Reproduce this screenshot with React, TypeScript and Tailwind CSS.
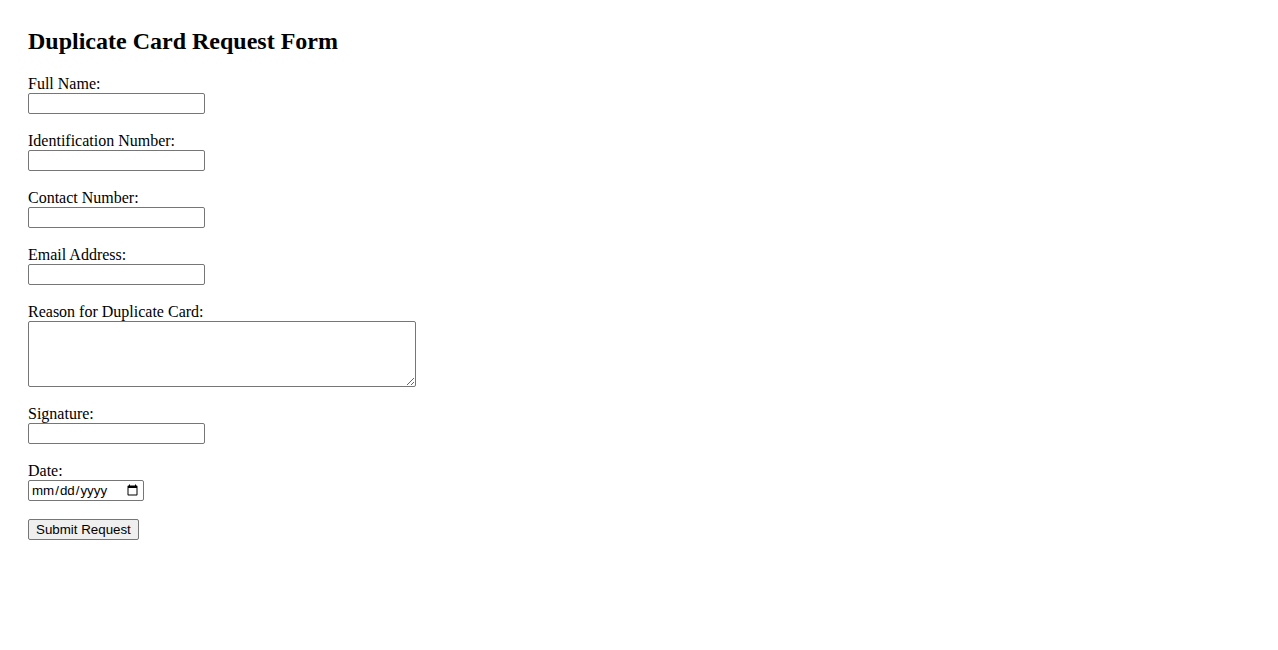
import React from 'react';

const FIELDS = [
  { label: 'Full Name:', type: 'text' },
  { label: 'Identification Number:', type: 'text' },
  { label: 'Contact Number:', type: 'tel' },
  { label: 'Email Address:', type: 'email' },
];

const labelCls = 'block pb-[2px] leading-[15px]';

const inputCls =
  "block h-[21px] w-[177px] rounded-[2px] border border-[#767676] bg-white px-[2px] py-[1px] text-[13.33px] font-['Liberation_Sans',Arial,sans-serif] text-black";

export default function App() {
  return (
    <div className="min-h-screen bg-white pl-[28px] pt-[27px] font-['Liberation_Serif','Times_New_Roman',serif] text-[16px] text-black">
      <h2 className="mb-[21px] text-[24px] font-bold leading-[28px]">Duplicate Card Request Form</h2>

      <form className="flex flex-col items-start" onSubmit={(e) => e.preventDefault()}>
        {FIELDS.map((f) => (
          <div key={f.label} className="mb-[19px]">
            <label className={labelCls}>{f.label}</label>
            <input type={f.type} className={inputCls} />
          </div>
        ))}

        <div className="mb-[19px]">
          <label className={labelCls}>Reason for Duplicate Card:</label>
          <textarea className="block h-[66px] w-[388px] rounded-[2px] border border-[#767676] bg-white px-[2px] py-[2px] font-['Liberation_Mono',monospace] text-[13.33px]" />
        </div>

        <div className="mb-[19px]">
          <label className={labelCls}>Signature:</label>
          <input type="text" className={inputCls} />
        </div>

        <div className="mb-[18px]">
          <label className={labelCls}>Date:</label>
          <input
            type="date"
            className="block h-[21px] w-[116px] rounded-[2px] border border-[#767676] bg-white px-[2px] py-[1px] text-[13.33px] font-['Liberation_Sans',Arial,sans-serif] text-black"
          />
        </div>

        <button
          type="submit"
          className="h-[21px] rounded-[2px] border border-[#767676] bg-[#efefef] px-[7px] py-[1px] text-[13.33px] leading-[17px] font-['Liberation_Sans',Arial,sans-serif] text-black"
        >
          Submit Request
        </button>
      </form>
    </div>
  );
}
